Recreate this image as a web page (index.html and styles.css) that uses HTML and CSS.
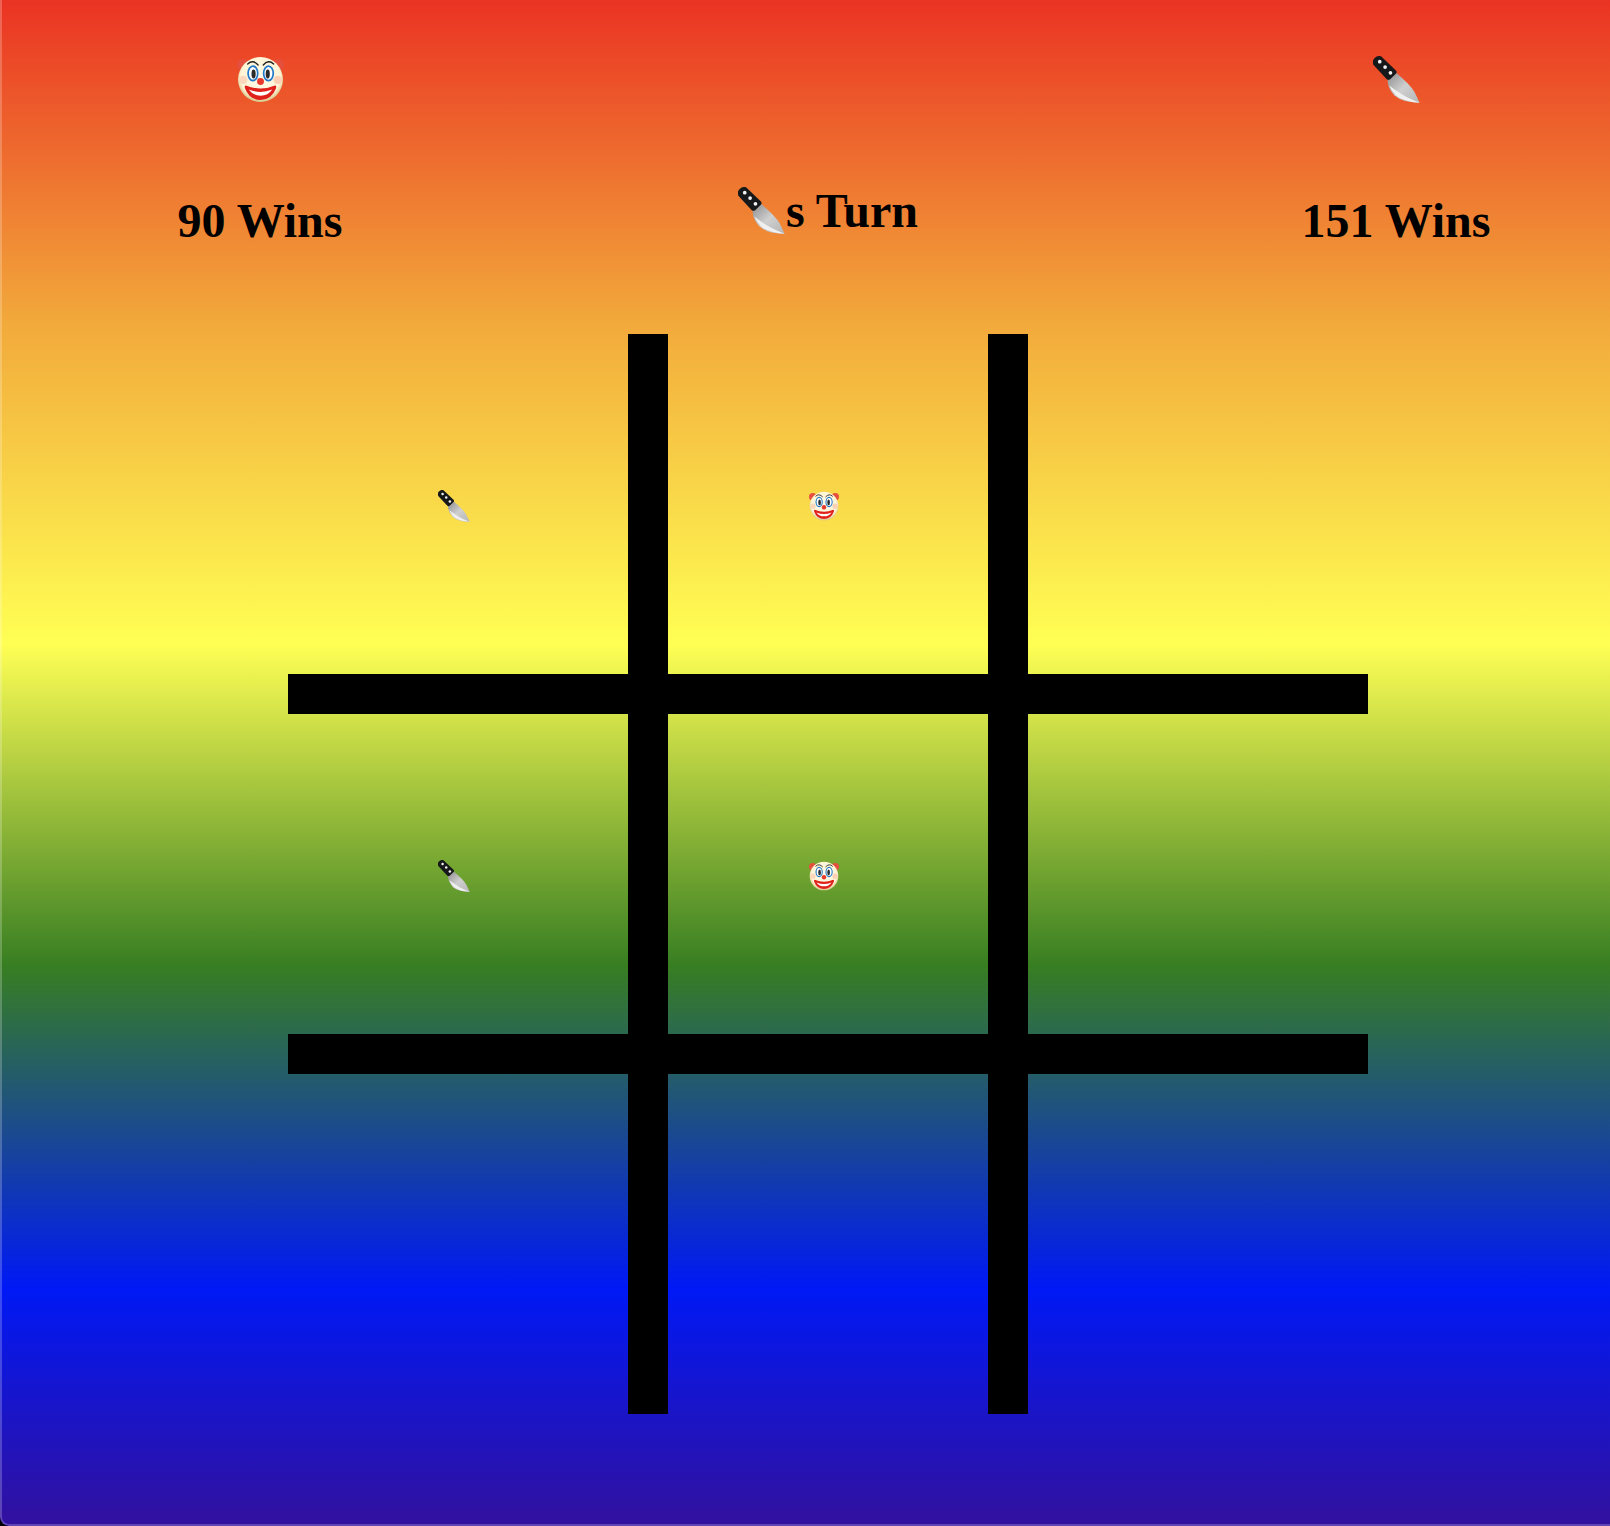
FILE: index.html
```html
<!DOCTYPE html>
<html>
<head>
<meta charset="utf-8">
<title>Tic Tac Toe</title>
<link rel="stylesheet" href="styles.css">
</head>
<body>
<svg class="defs" width="0" height="0">
	<defs>
		<linearGradient id="bladeFill" x1="0" y1="0" x2="1" y2="1">
			<stop offset="0" stop-color="#8a8a8a"/>
			<stop offset="0.5" stop-color="#cfcfcf"/>
			<stop offset="1" stop-color="#b5b5b5"/>
		</linearGradient>
		<radialGradient id="faceFill" cx="0.5" cy="0.45" r="0.55">
			<stop offset="0" stop-color="#fffbe8"/>
			<stop offset="0.8" stop-color="#fff4d6"/>
			<stop offset="1" stop-color="#d6c486"/>
		</radialGradient>
		<symbol id="knife" viewBox="0 0 140 140">
			<path d="M44 70L66 48Q112 86 124 108L139 139Q90 140 64 118Q46 98 44 78Z" fill="url(#bladeFill)"/>
			<path d="M48 88Q60 112 76 123Q100 138 139 139Q104 126 86 114Q66 102 48 88Z" fill="#f0f0f0"/>
			<path d="M3 8Q12 -3 24 1L69 44Q72 49 68 53L51 69Q46 73 41 69L1 26Q-3 15 3 8Z" fill="#17181a"/>
			<circle cx="20" cy="17" r="5.5" fill="#f2f2f2"/>
			<circle cx="36" cy="33" r="5.5" fill="#f2f2f2"/>
			<circle cx="52" cy="50" r="5.5" fill="#f2f2f2"/>
		</symbol>
		<symbol id="clown" viewBox="0 0 136 130">
			<circle cx="17" cy="23" r="17" fill="#e5503e"/>
			<circle cx="119" cy="23" r="17" fill="#e5503e"/>
			<circle cx="68" cy="65" r="65" fill="url(#faceFill)"/>
			<ellipse cx="18" cy="66" rx="12" ry="12" fill="#fbd8bc"/>
			<ellipse cx="118" cy="66" rx="12" ry="12" fill="#fbd0b4"/>
			<path d="M31 20Q46 6 61 23" fill="none" stroke="#222" stroke-width="4" stroke-linecap="round"/>
			<path d="M76 23Q91 6 106 20" fill="none" stroke="#222" stroke-width="4" stroke-linecap="round"/>
			<ellipse cx="46" cy="47" rx="14" ry="21" fill="#fff" stroke="#2279c8" stroke-width="5"/>
			<ellipse cx="91" cy="47" rx="14" ry="21" fill="#fff" stroke="#2279c8" stroke-width="5"/>
			<ellipse cx="48" cy="49" rx="6" ry="13" fill="#2a2a2a"/>
			<ellipse cx="89" cy="49" rx="6" ry="13" fill="#2a2a2a"/>
			<circle cx="68" cy="71" r="10" fill="#e8392b"/>
			<path d="M26 82Q68 100 110 82Q115 82 113 90Q100 124 68 124Q36 124 23 90Q21 82 26 82Z" fill="#e0201a"/>
			<path d="M34 94Q68 108 102 94Q90 112 68 112Q46 112 34 94Z" fill="#fff"/>
		</symbol>
	</defs>
</svg>
<div class="window">
	<div class="sky">
		<div class="scores">
			<div class="player">
				<svg class="icon-large"><use href="#clown"/></svg>
				<h2 class="wins">90 Wins</h2>
			</div>
			<h1 class="turn"><svg class="icon-large"><use href="#knife"/></svg><span>s Turn</span></h1>
			<div class="player">
				<svg class="icon-large"><use href="#knife"/></svg>
				<h2 class="wins">151 Wins</h2>
			</div>
		</div>
		<div class="board">
			<div class="cell top first"><svg class="icon-small"><use href="#knife"/></svg></div>
			<div class="cell top second"><svg class="icon-small clown"><use href="#clown"/></svg></div>
			<div class="cell top third"></div>
			<div class="cell mid first"><svg class="icon-small"><use href="#knife"/></svg></div>
			<div class="cell mid second"><svg class="icon-small clown"><use href="#clown"/></svg></div>
			<div class="cell mid third"></div>
			<div class="cell low first"></div>
			<div class="cell low second"></div>
			<div class="cell low third"></div>
			<div class="bar bar-v1"></div>
			<div class="bar bar-v2"></div>
			<div class="bar bar-h1"></div>
			<div class="bar bar-h2"></div>
		</div>
	</div>
</div>
</body>
</html>
```

FILE: styles.css
```css
html, body {
margin:0;
height:1526px;
overflow:hidden;
background-color:#000000;
}
.defs {
position:absolute;
}
.window {
height:1526px;
overflow:hidden;
border-radius:0 0 0 9px;
position:relative;
}
.window:after {
content:"";
position:absolute;
top:0;
left:0;
right:0;
bottom:0;
border-style:solid;
border-color:rgba(255,255,255,0.22);
border-width:0 0 2px 2px;
border-radius:0 0 0 9px;
}
.sky {
height:1610px;
padding-left:46px;
background:linear-gradient(to bottom, #ea3323 0, #f2a93b 322px, #ffff54 644px, #377e22 966px, #0019f5 1288px, #440e7f 1610px);
font-family:"Liberation Serif","Times New Roman",serif;
color:#000000;
}
.scores {
display:grid;
grid-template-columns:428px 1fr 428px;
height:334px;
}
.player {
display:flex;
flex-direction:column;
align-items:center;
padding-top:56px;
}
.wins {
margin:90px 0 0 0;
font-size:48px;
line-height:55px;
font-weight:bold;
white-space:nowrap;
}
.turn {
display:flex;
justify-content:center;
align-items:flex-start;
margin:0;
padding-top:183px;
font-size:48px;
line-height:55px;
font-weight:bold;
}
.icon-large {
display:block;
width:47px;
height:47px;
flex:none;
}
.turn .icon-large {
margin-top:4px;
}
.turn span {
margin-left:1px;
}
.board {
display:grid;
grid-template-columns:340px 40px 320px 40px 340px;
grid-template-rows:340px 40px 320px 40px 340px;
width:1080px;
height:1080px;
margin:0 auto;
}
.cell {
display:flex;
align-items:center;
justify-content:center;
padding:3px 8px 0 0;
}
.first { grid-column:1; }
.second { grid-column:3; }
.third { grid-column:5; }
.top { grid-row:1; }
.mid { grid-row:3; }
.low { grid-row:5; }
.icon-small {
display:block;
width:32px;
height:32px;
}
.icon-small.clown {
width:30px;
height:30px;
}
.bar {
background-color:#000000;
}
.bar-v1 { grid-column:2; grid-row:1 / -1; }
.bar-v2 { grid-column:4; grid-row:1 / -1; }
.bar-h1 { grid-row:2; grid-column:1 / -1; }
.bar-h2 { grid-row:4; grid-column:1 / -1; }
```
